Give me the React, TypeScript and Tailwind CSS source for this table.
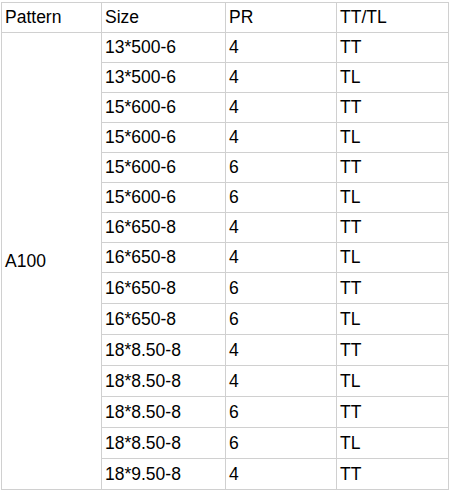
import React from "react";

const rows: [string, string, string][] = [
  ["13*500-6", "4", "TT"],
  ["13*500-6", "4", "TL"],
  ["15*600-6", "4", "TT"],
  ["15*600-6", "4", "TL"],
  ["15*600-6", "6", "TT"],
  ["15*600-6", "6", "TL"],
  ["16*650-8", "4", "TT"],
  ["16*650-8", "4", "TL"],
  ["16*650-8", "6", "TT"],
  ["16*650-8", "6", "TL"],
  ["18*8.50-8", "4", "TT"],
  ["18*8.50-8", "4", "TL"],
  ["18*8.50-8", "6", "TT"],
  ["18*8.50-8", "6", "TL"],
  ["18*9.50-8", "4", "TT"],
];

const cell =
  "flex items-center pl-[3px] border-r border-b border-[#d0d0d0] text-[17.5px] text-black";

export default function App() {
  return (
    <div
      className="bg-white w-[451px] h-[491px] pt-[2px] pl-[1px]"
      style={{ fontFamily: '"Liberation Sans", Arial, sans-serif' }}
    >
      <div className="grid grid-cols-[100px_124px_111px_112px] grid-rows-[repeat(9,30px)_repeat(7,31px)] border-t border-l border-[#d0d0d0] w-max">
        <div className={cell}>Pattern</div>
        <div className={cell}>Size</div>
        <div className={cell}>PR</div>
        <div className={cell}>TT/TL</div>
        <div className={`${cell} col-start-1 row-start-2 row-span-15`}>A100</div>
        {rows.map(([s, pr, t], i) => (
          <React.Fragment key={i}>
            <div className={`${cell} col-start-2`}>{s}</div>
            <div className={cell}>{pr}</div>
            <div className={cell}>{t}</div>
          </React.Fragment>
        ))}
      </div>
    </div>
  );
}
